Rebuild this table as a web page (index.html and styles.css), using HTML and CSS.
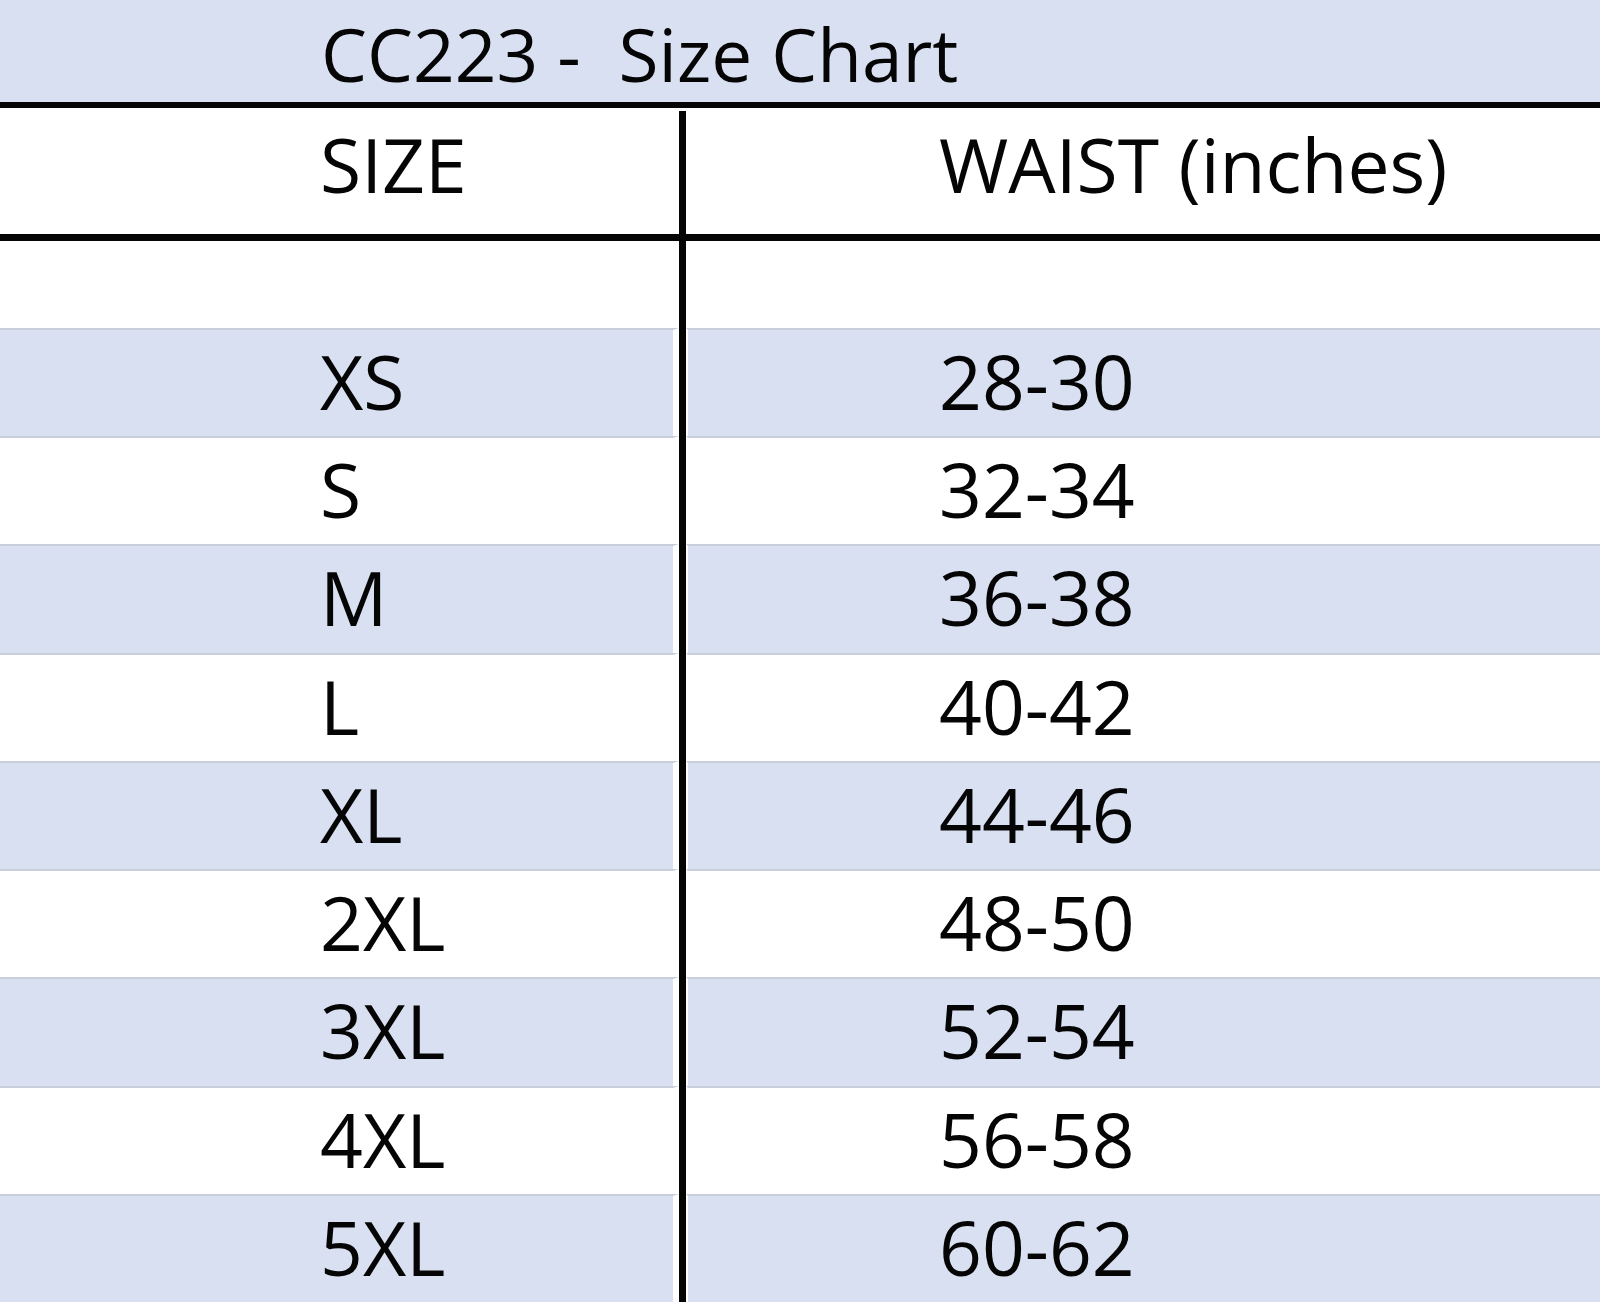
FILE: index.html
```html
<!DOCTYPE html>
<html lang="en">
<head>
<meta charset="utf-8">
<title>CC223 - Size Chart</title>
<link rel="stylesheet" href="styles.css">
</head>
<body>
<div class="sheet">
  <div class="title-band"><span class="title">CC223 -&nbsp; Size Chart</span></div>
  <div class="rule rule-top"></div>
  <div class="row header-row">
    <div class="cell left">SIZE</div>
    <div class="divider divider-start"></div>
    <div class="cell right">WAIST (inches)</div>
  </div>
  <div class="rule rule-mid"></div>
  <div class="row blank-row">
    <div class="cell left"></div>
    <div class="divider"></div>
    <div class="cell right"></div>
  </div>
  <div class="data">
    <div class="row data-row shaded"><div class="cell left">XS</div><div class="divider"></div><div class="cell right">28-30</div></div>
    <div class="row data-row"><div class="cell left">S</div><div class="divider"></div><div class="cell right">32-34</div></div>
    <div class="row data-row shaded"><div class="cell left">M</div><div class="divider"></div><div class="cell right">36-38</div></div>
    <div class="row data-row"><div class="cell left">L</div><div class="divider"></div><div class="cell right">40-42</div></div>
    <div class="row data-row shaded"><div class="cell left">XL</div><div class="divider"></div><div class="cell right">44-46</div></div>
    <div class="row data-row"><div class="cell left">2XL</div><div class="divider"></div><div class="cell right">48-50</div></div>
    <div class="row data-row shaded"><div class="cell left">3XL</div><div class="divider"></div><div class="cell right">52-54</div></div>
    <div class="row data-row"><div class="cell left">4XL</div><div class="divider"></div><div class="cell right">56-58</div></div>
    <div class="row data-row shaded"><div class="cell left">5XL</div><div class="divider"></div><div class="cell right">60-62</div></div>
  </div>
</div>
</body>
</html>
```

FILE: styles.css
```css
* { box-sizing: border-box; }

html, body {
  margin: 0;
  padding: 0;
  background: #ffffff;
}

body {
  width: 1600px;
  height: 1302px;
  overflow: hidden;
  font-family: "Open Sans", "Noto Sans", sans-serif;
  color: #050505;
}

.sheet {
  display: flex;
  flex-direction: column;
  width: 1600px;
  height: 1302px;
}

.title-band {
  height: 102px;
  flex: none;
  background: #d9e0f1;
  padding: 17px 0 0 321px;
}

.title {
  display: block;
  font-size: 73px;
  line-height: 73px;
  white-space: pre;
}

.rule {
  flex: none;
  background: #050505;
}

.rule-top { height: 6px; }
.rule-mid { height: 7px; }

.row {
  display: grid;
  grid-template-columns: 679px 7px 1fr;
  flex: none;
}

.cell {
  font-size: 75px;
  line-height: 75px;
  white-space: pre;
}

.cell.left {
  padding-left: 320px;
  border-right: 6px solid #ffffff;
}

.cell.right {
  padding-left: 251px;
  border-left: 2px solid #ffffff;
}

.divider {
  background: #050505;
}

.divider-start {
  margin-top: 3px;
}

.header-row {
  height: 126px;
}

.header-row .cell {
  padding-top: 19px;
}

.blank-row {
  height: 87px;
}

.data {
  flex: 1;
  display: grid;
  grid-template-rows: repeat(9, 1fr);
}

.data-row .cell {
  padding-top: 14px;
  border-top: 2px solid #c9cedd;
}

.data-row.shaded .cell {
  background: #d9e0f1;
}
```
